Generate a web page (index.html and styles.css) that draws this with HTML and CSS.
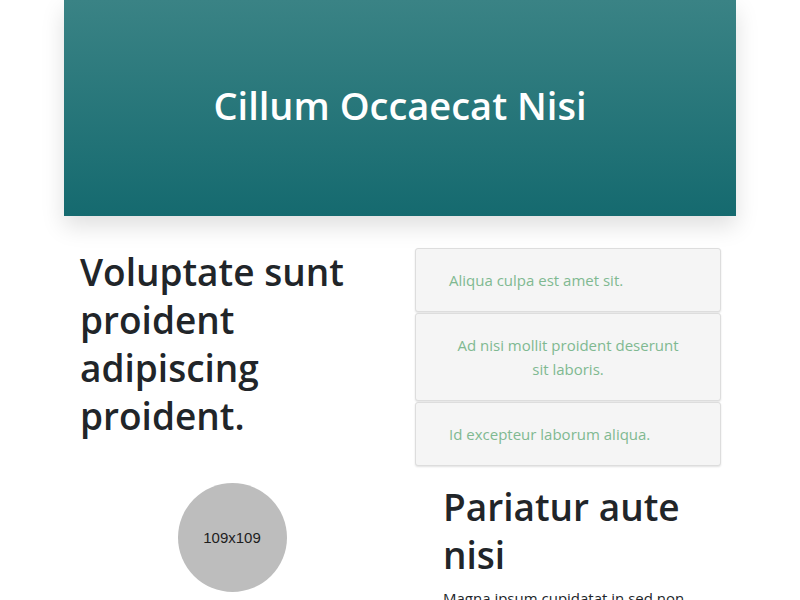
FILE: index.html
```html
<!DOCTYPE html>
<html lang="en">
<head>
<meta charset="utf-8">
<title>Cillum Occaecat Nisi</title>
<link rel="stylesheet" href="styles.css">
</head>
<body>
<div class="container">
  <header class="hero">
    <h1 class="hero-title">Cillum Occaecat Nisi</h1>
  </header>
  <main class="grid">
    <div class="col col-left">
      <h2 class="big-heading">Voluptate sunt proident adipiscing proident.</h2>
    </div>
    <div class="col col-right">
      <ul class="list-group">
        <li class="list-item">Aliqua culpa est amet sit.</li>
        <li class="list-item list-item-center">Ad nisi mollit proident deserunt sit laboris.</li>
        <li class="list-item">Id excepteur laborum aliqua.</li>
      </ul>
    </div>
    <div class="col col-left col-avatar">
      <div class="avatar">109x109</div>
    </div>
    <div class="col col-right">
      <div class="card-body">
        <h2 class="big-heading">Pariatur aute nisi</h2>
        <p class="text">Magna ipsum cupidatat in sed non proident.</p>
      </div>
    </div>
  </main>
</div>
</body>
</html>
```
FILE: styles.css
```css
html, body {
  margin: 0;
  padding: 0;
  background: #ffffff;
}
body {
  font-family: "Open Sans", "Noto Sans", sans-serif;
  color: #212529;
}
.container {
  width: 672px;
  margin: 0 auto;
}
.hero {
  height: 216px;
  background: linear-gradient(to bottom, #3a8385 0%, #156a6f 100%);
  box-shadow: 0 10px 22px rgba(0, 0, 0, 0.13);
  display: flex;
  align-items: center;
  justify-content: center;
}
.hero-title {
  margin: 0;
  color: #ffffff;
  font-size: 38px;
  font-weight: 600;
  line-height: 48px;
  padding-bottom: 6px;
}
.grid {
  display: grid;
  grid-template-columns: 336px 336px;
  row-gap: 17px;
  margin-top: 32px;
}
.col-left {
  padding: 0 16px;
}
.col-right {
  padding: 0 15px;
}
.big-heading {
  margin: 0;
  font-size: 37px;
  font-weight: 600;
  line-height: 48px;
  color: #212529;
}
.list-group {
  list-style: none;
  margin: 0;
  padding: 0;
  display: flex;
  flex-direction: column;
  gap: 1px;
}
.list-item {
  background: #f5f5f5;
  border: 1px solid #dddddd;
  border-radius: 3px;
  box-shadow: 0 1px 2px rgba(0, 0, 0, 0.12);
  padding: 19px 33px;
  font-size: 15px;
  line-height: 24px;
  color: #80b991;
}
.list-item-center {
  text-align: center;
}
.col-avatar {
  display: flex;
  justify-content: center;
}
.avatar {
  width: 109px;
  height: 109px;
  border-radius: 50%;
  background: #bdbdbd;
  color: #1e1e1e;
  font-family: "Liberation Sans", Arial, sans-serif;
  font-size: 15px;
  display: flex;
  align-items: center;
  justify-content: center;
}
.card-body {
  padding: 0 28px;
}
.big-heading + .text {
  margin-top: 7px;
}
.text {
  margin: 0;
  font-size: 15px;
  line-height: 24px;
}
```
